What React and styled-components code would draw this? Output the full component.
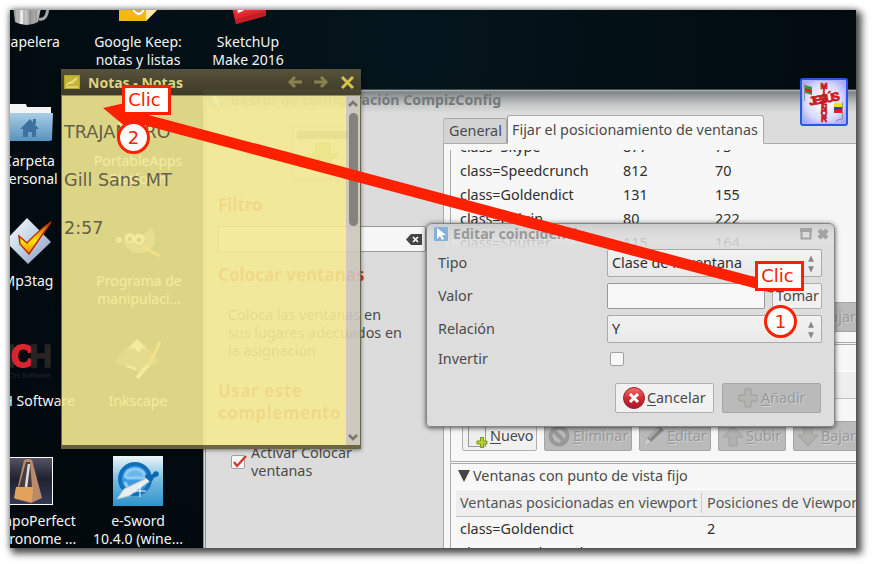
import React from "react";
import styled, { createGlobalStyle } from "styled-components";

const GlobalStyle = createGlobalStyle`
  * { box-sizing: border-box; }
  body { margin: 0; background: #fff; font-family: "Noto Sans", sans-serif; font-size: 14.35px; line-height: 18px; color: #4a4a4a; white-space: nowrap; overflow: hidden; }
`;

const Page = styled.main`
  position: relative;
  width: 872px;
  height: 564px;
  padding: 10px;
  overflow: hidden;
`;
const Desktop = styled.section`
  position: relative;
  width: 846px;
  height: 538px;
  overflow: hidden;
  background: radial-gradient(circle at 400px 30px, #05151d 0, #031117 180px, #020b10 430px, #02080b 800px);
`;
const Elevation = styled.div`
  width: 846px;
  height: 538px;
  box-shadow: 4px 4px 7px 2px rgba(0, 0, 0, 0.62), 0 0 6px 1px rgba(0, 0, 0, 0.35);
`;

/* Desktop launchers */
const Launcher = styled.div`
  position: absolute;
  left: ${(p) => p.$x - 60}px;
  top: ${(p) => p.$y}px;
  width: 120px;
  display: flex;
  flex-direction: column;
  align-items: center;
  color: #f4f6f6;
  font-size: 14px;
  text-align: center;
  white-space: pre;
  svg { display: block; margin-bottom: ${(p) => p.$gap || 6}px; }
`;

/* Settings window */
const SettingsWindow = styled.section`
  position: absolute;
  left: 193px;
  top: 79px;
  width: 680px;
  height: 480px;
  border: 1px solid #85898a;
  border-top-color: #444d50;
  border-left: 3px double #8b9092;
  border-radius: 4px 0 0 0;
  background: linear-gradient(#b5b9ba 0, #7e8485 2px, #a0a4a5 8px, #c6c8c8 15px, #dcdcdc 23px);
`;
const WindowTitle = styled.header`
  display: flex;
  align-items: center;
  height: 25px;
  gap: 6px;
  padding: 0 0 6px 4px;
  color: #74787a;
  font-size: 14.2px;
  font-weight: 700;
`;
const Columns = styled.div`
  display: flex;
  height: 455px;
`;
const Sidebar = styled.aside`
  width: 237px;
  padding: 11px 0 0 12px;
`;
const PluginIcon = styled.div`
  width: 61px;
  height: 53px;
  margin-left: 74px;
  padding: 3px;
  border: 2px solid #c0c0c0;
  border-radius: 3px;
  background: #e6e6e6;
  box-shadow: 0 1px 3px #aaa;
`;
const SectionHeading = styled.h2`
  margin: ${(p) => p.$top}px 0 0;
  color: #d5332c;
  font-size: 17px;
  letter-spacing: ${(p) => p.$tracking || 0}px;
  font-weight: 700;
  line-height: 22px;
`;
const SearchField = styled.div`
  display: flex;
  justify-content: flex-end;
  align-items: center;
  width: 208px;
  height: 26px;
  margin-top: 10px;
  padding-right: 3px;
  border: 1px solid #999;
  border-radius: 2px;
  background: #f7f7f7;
`;
const Description = styled.p`
  margin: 20px 0 0 10px;
`;
const CheckLine = styled.label`
  display: flex;
  gap: 6px;
  margin: 20px 0 0 13px;
`;
const CheckBox = styled.span`
  width: 14px;
  height: 14px;
  flex: none;
  margin-top: ${(p) => p.$top || 0}px;
  margin-left: ${(p) => p.$left || 0}px;
  border: 1px solid #a0a0a0;
  border-radius: 2px;
  background: #f8f8f8;
  svg { display: block; overflow: visible; }
`;
const Notebook = styled.div`
  width: 430px;
`;
const Tabs = styled.nav`
  display: flex;
  align-items: flex-end;
  height: 29px;
`;
const Tab = styled.div`
  height: ${(p) => (p.$active ? 29 : 26)}px;
  width: ${(p) => (p.$active ? 257 : 64)}px;
  padding: ${(p) => (p.$active ? 5 : 3)}px 0 0 ${(p) => (p.$active ? 4 : 5)}px;
  border: 1px solid #aaa;
  border-bottom-color: ${(p) => (p.$active ? "#f7f7f7" : "#aaa")};
  border-left-color: ${(p) => (p.$active ? "#999" : "#bbb")};
  border-radius: 3px 3px 0 0;
  background: ${(p) => (p.$active ? "#f7f7f7" : "#d3d3d3")};
`;
const TabRule = styled.div`
  flex: 1;
  border-bottom: 1px solid #aaa;
`;
const NotebookPage = styled.div`
  height: 430px;
  padding: 6px 0 0 6px;
  border-left: 1px solid #aaa;
  background: #f7f7f7;
`;
const Group = styled.div`
  display: flex;
  flex-direction: column;
  height: ${(p) => p.$height}px;
  margin-bottom: 1px;
  border-left: 1px solid #aaa;
  border-top: ${(p) => (p.$open ? 0 : 1)}px solid #aaa;
  border-bottom: 1px solid #aaa;
  overflow: hidden;
`;
const TableRow = styled.div`
  display: grid;
  grid-template-columns: ${(p) => p.$columns || "163px 92px 1fr"};
  flex: none;
  height: 24px;
  padding-left: 9px;
  line-height: 23px;
  color: #2e2e2e;
`;
const Rows = styled.div`
  margin-top: ${(p) => p.$shift || 0}px;
  flex: 1;
`;
const TableHead = styled(TableRow)`
  height: 28px;
  margin-left: 5px;
  padding-left: 4px;
  border-top: 1px solid #fff;
  border-bottom: 1px solid #c0c0c0;
  background: #eee;
  color: #555;
  line-height: 26px;
  span + span { border-left: 1px solid #ccc; margin: 3px 0; padding-left: 5px; line-height: 20px; }
`;
const Expander = styled.div`
  display: flex;
  align-items: center;
  gap: 3px;
  height: ${(p) => p.$height || 26}px;
  padding: 0 0 2px 7px;
`;
const ButtonBar = styled.div`
  display: flex;
  flex: none;
  gap: 7px;
  margin: 0 0 10px 11px;
`;
const ToolButton = styled.button`
  display: flex;
  align-items: center;
  flex: none;
  gap: ${(p) => p.$gap ?? 2}px;
  width: ${(p) => p.$width}px;
  height: ${(p) => p.$height || 30}px;
  padding: 0 0 0 ${(p) => p.$pad ?? 5}px;
  border: 1px solid ${(p) => (p.$disabled ? "#a5a5a5" : "#b0b0b0")};
  border-radius: 2px;
  background: ${(p) => (p.$disabled ? "#bababa" : "#f1f1f1")};
  color: ${(p) => (p.$disabled ? "#999" : "#484848")};
  text-shadow: ${(p) => (p.$disabled ? "1px 1px 0 #d0d0d0" : "none")};
  font: inherit;
  white-space: nowrap;
  u { text-underline-offset: 2px; text-decoration-thickness: 1px; }
  svg { flex: none; }
`;

/* Match editor dialog */
const Dialog = styled.section`
  position: absolute;
  left: 416px;
  top: 213px;
  width: 409px;
  height: 204px;
  border: 1px solid #858585;
  border-radius: 6px 6px 4px 4px;
  background: linear-gradient(rgb(205, 205, 205) 0, rgba(217, 217, 217, 0.98) 8px, rgba(221, 221, 221, 0.84) 18px, rgba(221, 221, 221, 0.94) 22px, #ddd 25px);
  box-shadow: 0 1px 4px rgba(0, 0, 0, 0.6), 0 0 8px rgba(0, 0, 0, 0.15);
`;
const DialogTitle = styled.header`
  display: flex;
  align-items: center;
  height: 25px;
  padding: 0 5px 5px 7px;
  gap: 5px;
  color: #999;
  font-size: 14.1px;
  font-weight: 700;
  span { flex: 1; }
`;
const Form = styled.div`
  display: grid;
  grid-template-columns: 169px 215px;
  grid-template-rows: 28px 26px 28px 20px;
  row-gap: 6px;
  align-items: center;
  padding-left: 11px;
`;
const Combo = styled.div`
  display: flex;
  justify-content: space-between;
  align-items: center;
  height: 28px;
  padding: 0 5px 0 4px;
  border: 1px solid #aaa;
  border-radius: 2px;
  background: linear-gradient(#f2f2f2, #e9e9e9);
  color: #2e2e2e;
`;
const ValueLine = styled.div`
  display: flex;
  gap: 7px;
`;
const Entry = styled.div`
  width: 158px;
  height: 26px;
  border: 1px solid #999;
  border-radius: 2px;
  background: #f8f8f8;
`;
const DialogActions = styled.footer`
  display: flex;
  justify-content: flex-end;
  gap: 8px;
  padding: 14px 13px 0 0;
`;

/* Notes window */
const NoteWindow = styled.section`
  position: absolute;
  left: 51px;
  top: 59px;
  width: 300px;
  height: 380px;
  display: flex;
  flex-direction: column;
  box-shadow: 0 1px 4px rgba(0, 0, 0, 0.5);
`;
const NoteTitle = styled.header`
  display: flex;
  align-items: center;
  flex: none;
  height: 26px;
  padding: 0 6px 0 3px;
  background: linear-gradient(rgba(92, 87, 62, 0.93), rgba(80, 74, 50, 0.93) 12px, rgba(66, 61, 43, 0.95));
  color: #dfd383;
  font-size: 14px;
  font-weight: 700;
  span { flex: 1; padding: 1px 0 0 8px; }
`;
const NoteBody = styled.div`
  display: flex;
  flex: 1;
  border: 1px solid #6e6744;
  border-top: 1px solid #96905f;
  border-bottom: 4px solid rgba(105, 98, 64, 0.97);
`;
const NoteText = styled.div`
  flex: 1;
  padding: 24px 0 0 2px;
  background: rgba(243, 233, 146, 0.91);
  color: #646048;
  font: 17.6px/24px "DejaVu Sans", sans-serif;
  p { margin: 0 0 24px; }
`;
const NoteScroll = styled.div`
  display: flex;
  flex-direction: column;
  align-items: center;
  width: 14px;
  padding: 4px 0;
  background: rgba(203, 199, 188, 0.91);
`;
const Thumb = styled.div`
  width: 9px;
  height: 113px;
  margin: 5px 0 auto;
  border-radius: 5px;
  background: #84827d;
`;

/* Callouts over the screen */
const Arrow = styled.svg`
  position: absolute;
  left: 0;
  top: 0;
`;
const ClickTag = styled.div`
  position: absolute;
  left: ${(p) => p.$x}px;
  top: ${(p) => p.$y}px;
  width: 49px;
  height: 30px;
  padding-right: 4px;
  border: 3px solid #ff2000;
  background: #fefefe;
  color: #ff2000;
  font: 18px/24px "DejaVu Sans", sans-serif;
  text-align: center;
`;
const StepBadge = styled.div`
  position: absolute;
  left: ${(p) => p.$x}px;
  top: ${(p) => p.$y}px;
  width: 33px;
  height: 33px;
  border: 3px solid #ff2000;
  border-radius: 50%;
  background: #fdfdfd;
  color: #ff2000;
  font: 18px/27px "DejaVu Sans", sans-serif;
  text-align: center;
`;
const Emblem = styled.div`
  position: absolute;
  left: 790px;
  top: 68px;
  width: 48px;
  height: 48px;
  border: 2px solid #2856ea;
  border-radius: 3px;
  background: radial-gradient(circle, #fff 15%, #d6d8ff 60%, #8f95fb 100%);
  box-shadow: inset 0 0 0 1px #aab6ff;
`;

const TrashIcon = () => (
  <svg width="44" height="46">
    <defs><linearGradient id="can"><stop stopColor="#777" /><stop offset=".3" stopColor="#eee" /><stop offset=".6" stopColor="#999" /><stop offset="1" stopColor="#ccc" /></linearGradient></defs>
    <path d="M3 18 6 42Q18 48 29 42L34 18Z" fill="url(#can)" />
    <path d="M10 25v17M15 25v19M21 25v19M27 25v17" stroke="#777" opacity=".6" />
    <path d="M30 39q9 2 9-15" stroke="#a5a5a5" strokeWidth="3" fill="none" />
  </svg>
);
const KeepIcon = () => (
  <svg width="40" height="46">
    <path d="M1 0h38v30L28 41H1Z" fill="#f6b80f" />
    <path d="M28 41V30h11Z" fill="#ffe9a8" />
    <path d="M15 26h11v5q-5 8-11 0Z" fill="#fff" /><path d="M17 29h7v2q-3 3-7 0Z" fill="#cda55a" />
  </svg>
);
const SketchUpIcon = () => (
  <svg width="40" height="46">
    <path d="M2 20 38 10 38 35 8 44Z" fill="#e3242d" /><path d="M2 20 38 10 37 29 8 35Z" fill="#ed3037" />
    <path d="M8 24 24 20 15 31 10 33Z" fill="#fff" /><path d="M8 44 38 36V31L8 39Z" fill="#c71c25" />
  </svg>
);
const FolderIcon = () => (
  <svg width="48" height="40">
    <path d="M0 0h21l1 3h24v10H0Z" fill="#f4f4f4" />
    <defs><linearGradient id="fold" x2="0" y2="1"><stop stopColor="#a9cee6" /><stop offset="1" stopColor="#5692c0" /></linearGradient></defs>
    <path d="M0 9h48l-1 26q0 2-2 2H0Z" fill="url(#fold)" />
    <path d="M15 25 25 15 34 25h-3v8h-4v-5h-4v5h-5v-8Z" fill="#3e719d" /><path d="M28 15h3v5h-3Z" fill="#3e719d" />
  </svg>
);
const PortableIcon = () => (
  <svg width="48" height="46"><circle cx="24" cy="22" r="20" fill="#c8c8c8" /><path d="M10 8h28l-6 15 6 15H10Z" fill="#e8e8e8" /></svg>
);
const TagIcon = () => (
  <svg width="52" height="46">
    <defs><linearGradient id="sheet" x2="1" y2="1"><stop stopColor="#fff" /><stop offset=".5" stopColor="#c4d3e8" /><stop offset="1" stopColor="#8794b8" /></linearGradient><linearGradient id="tick" x2="0" y2="1"><stop stopColor="#e65d10" /><stop offset=".6" stopColor="#ffe600" /><stop offset="1" stopColor="#ef7c0c" /></linearGradient></defs>
    <path d="M25 0 49 24 26 46 3 23Z" fill="url(#sheet)" />
    <path d="M17 18 25 25Q37 12 49 4L27 36 18 26Z" fill="url(#tick)" stroke="#b63106" strokeWidth="1.5" />
  </svg>
);
const GimpIcon = () => (
  <svg width="46" height="36">
    <path d="M9 9q12 9 27-7l3 11q-1 14-14 15Q13 29 8 18Z" fill="#77746c" />
    <circle cx="14" cy="13" r="5" fill="#eee" /><circle cx="23" cy="14" r="5.5" fill="#eee" /><circle cx="14" cy="14" r="2" /><circle cx="23" cy="15" r="2.3" /><circle cx="3" cy="15" r="3" fill="#ccc" />
    <path d="M27 22 44 31" stroke="#f08b21" strokeWidth="3" />
  </svg>
);
const InkscapeIcon = () => (
  <svg width="48" height="46">
    <path d="M19 2q4-3 8 0l17 18q3 6-8 5l-7 4q4 4-6 4L16 29 4 25q-4-2 0-7Z" fill="#555" />
    <path d="M23 0 32 10 27 9 25 14 20 9 14 11Z" fill="#fff" /><path d="M13 27l9 3" stroke="#fff" strokeWidth="2" />
    <path d="M46 3 34 28" stroke="#e9a23a" strokeWidth="3" /><path d="M34 26 23 39" stroke="#eee" strokeWidth="4" />
  </svg>
);
const NchLogo = styled.div`
  display: flex;
  flex-direction: column;
  align-items: flex-end;
  width: 64px;
  height: 50px;
  padding: 2px 10px 0 0;
  color: #282426;
  font: 700 31px/26px "Liberation Sans", sans-serif;
  letter-spacing: -4px;
  span { -webkit-text-stroke: 1.5px #282426; padding-right: 3px; height: 27px; }
  b { color: #d9252f; font-weight: 700; -webkit-text-stroke: 2px #d9252f; }
  small { font-size: 7.5px; line-height: 9px; letter-spacing: 0; font-weight: 400; }
`;
const MetronomeIcon = () => (
  <svg width="46" height="48">
    <defs><linearGradient id="mbg" x2="0" y2="1"><stop stopColor="#555565" /><stop offset=".45" stopColor="#20222f" /><stop offset="1" stopColor="#343b59" /></linearGradient></defs>
    <rect x=".5" y=".5" width="45" height="47" fill="url(#mbg)" stroke="#fff" />
    <path d="M17 3q4-2 8 0l10 38-11 5-16-4Z" fill="#bb8a6b" /><path d="M19 5 12 30h13L23 5Z" fill="#463e42" /><path d="M9 30h17l-1 15L7 41Z" fill="#e3a25c" /><path d="M22 7 19 30" stroke="#ddd" strokeWidth="2.5" />
  </svg>
);
const SwordIcon = () => (
  <svg width="50" height="50">
    <defs><linearGradient id="sbg" x2="0" y2="1"><stop stopColor="#eef6fb" /><stop offset=".5" stopColor="#75b9de" /><stop offset="1" stopColor="#2d93cb" /></linearGradient></defs>
    <rect width="50" height="50" fill="url(#sbg)" />
    <circle cx="22" cy="23" r="15" fill="#3d9be0" stroke="#1170ba" strokeWidth="4" />
    <path d="M12 22q1-9 10-9t10 9H13" fill="#6ab8ee" stroke="#8fcaf3" strokeWidth="3" /><path d="M12 26q3 9 11 9" fill="none" stroke="#8fcaf3" strokeWidth="3" />
    <path d="M4 43 11 33 34 22 37 25 16 40Z" fill="#e8edf0" stroke="#b7c3cc" /><path d="M33 19l6 6M37 22l5-3" stroke="#0e68af" strokeWidth="4" /><circle cx="43" cy="18" r="2.8" fill="#0e68af" />
    <path d="M27 29v12M21 35h12" stroke="#fff" />
  </svg>
);
const CursorIcon = () => (
  <svg width="14" height="14"><rect width="14" height="14" rx="1" fill="#83b1d9" /><path d="M3 1v11l3-3 2 4 2-1-2-4h4Z" fill="#fff" /></svg>
);
const Ban = () => (<svg width="22" height="22"><circle cx="11" cy="11" r="8.5" fill="none" stroke="#989898" strokeWidth="4" /><path d="M5 5l12 12" stroke="#989898" strokeWidth="4" /></svg>);
const Pencil = () => (<svg width="22" height="22"><path d="M1 21 4 13 16 1l5 4L8 17Z" fill="#888" /><path d="M1 21 4 13l4 4Z" fill="#ccc" /><path d="M6 13 16 3" stroke="#b0b0b0" strokeWidth="2" /></svg>);
const BlockArrow = ({ down }) => (<svg width="22" height="22"><path d={down ? "M7 1h8v9h6L11 21 1 10h6Z" : "M7 21h8v-9h6L11 1 1 12h6Z"} fill="#b0b1ae" stroke="#a0a0a0" /></svg>);
const NewDoc = () => (<svg width="20" height="24"><rect x=".5" y="1.5" width="17" height="21" fill="#eee" stroke="#999" /><path d="M12.5 13.5h3v3.5h3.5v3h-3.5v3.5h-3v-3.5h-3.5v-3h3.5Z" fill="#b9d335" stroke="#7a9519" /></svg>);
const PlusIcon = () => (<svg width="20" height="20"><path d="M7 1h6v6h6v6h-6v6H7v-6H1V7h6Z" fill="#b4b5b0" stroke="#9d9e98" /></svg>);
const CancelIcon = () => (
  <svg width="22" height="22"><defs><linearGradient id="can2" x2="0" y2="1"><stop stopColor="#ee7168" /><stop offset=".6" stopColor="#c9232d" /><stop offset="1" stopColor="#a21b34" /></linearGradient></defs><circle cx="11" cy="11" r="10.5" fill="url(#can2)" stroke="#9e1e2e" /><path d="M7 7l8 8M15 7l-8 8" stroke="#fff" strokeWidth="3" /></svg>
);
const Spin = () => (<svg width="10" height="18"><path d="M5 2 7.5 7.5h-5ZM5 18 7.5 12.5h-5Z" fill="#858585" stroke="#858585" strokeWidth=".5" /></svg>);

const matches = [["Skype", "877", "73"], ["Speedcrunch", "812", "70"], ["Goldendict", "131", "155"], ["Pidgin", "80", "222"], ["Shutter", "115", "164"]];

const Actions = () => (
  <ButtonBar>
    <ToolButton $width={75}><NewDoc /><span><u>N</u>uevo</span></ToolButton>
    <ToolButton $disabled $width={88} $pad={3} $gap={3}><Ban /><span><u>E</u>liminar</span></ToolButton>
    <ToolButton $disabled $width={72} $pad={3} $gap={2}><Pencil /><span><u>E</u>ditar</span></ToolButton>
    <ToolButton $disabled $width={68} $pad={3} $gap={2}><BlockArrow /><span><u>S</u>ubir</span></ToolButton>
    <ToolButton $disabled $width={70} $pad={3} $gap={2}><BlockArrow down /><span><u>B</u>ajar</span></ToolButton>
  </ButtonBar>
);

export default function App() {
  return (
    <Page>
      <GlobalStyle />
      <Elevation>
        <Desktop>
          <Launcher $x={21} $y={-30} $gap={7}><TrashIcon />Papelera</Launcher>
          <Launcher $x={128} $y={-30} $gap={7}><KeepIcon />{"Google Keep:\nnotas y listas"}</Launcher>
          <Launcher $x={238} $y={-30} $gap={7}><SketchUpIcon />{"SketchUp\nMake 2016"}</Launcher>
          <Launcher $x={19} $y={94} $gap={8}><FolderIcon />{"Carpeta\nPersonal"}</Launcher>
          <Launcher $x={128} $y={88} $gap={8}><PortableIcon />{"PortableApps\nPlatform"}</Launcher>
          <Launcher $x={18} $y={208} $gap={8}><TagIcon />Mp3tag</Launcher>
          <Launcher $x={129} $y={215} $gap={11}><GimpIcon />{"Programa de\nmanipulaci..."}</Launcher>
          <Launcher $x={19} $y={332}><NchLogo><span>N<b>C</b>H</span><small>NCH Software</small></NchLogo>NCH Software</Launcher>
          <Launcher $x={128} $y={329} $gap={7}><InkscapeIcon />Inkscape</Launcher>
          <Launcher $x={20} $y={447} $gap={7}><MetronomeIcon />{"TempoPerfect\nMetronome ..."}</Launcher>
          <Launcher $x={128} $y={446} $gap={6}><SwordIcon />{"e-Sword\n10.4.0 (wine..."}</Launcher>

          <SettingsWindow>
            <WindowTitle><CursorIcon />Gestor de configuración CompizConfig</WindowTitle>
            <Columns>
              <Sidebar>
                <PluginIcon><svg width="51" height="43"><path d="M0 0h51v8H0Z" fill="#777" /><path d="M19 12h14v11h8L26 38 10 23h9Z" fill="#9dc641" stroke="#718f30" /></svg></PluginIcon>
                <SectionHeading $top={15}>Filtro</SectionHeading>
                <SearchField><svg width="16" height="11"><path d="M5 0h11v11H5L0 5.5Z" fill="#444" /><path d="M7 3l5 5M12 3 7 8" stroke="#fff" strokeWidth="1.7" /></svg></SearchField>
                <SectionHeading $top={12}>Colocar ventanas</SectionHeading>
                <Description>Coloca las ventanas en<br />sus lugares adecuados en<br />la asignación</Description>
                <SectionHeading $top={20} $tracking={0.5}>Usar este<br />complemento</SectionHeading>
                <CheckLine>
                  <CheckBox $top={11}><svg width="14" height="12"><path d="M2 6 5 10 14 0" fill="none" stroke="#d6352a" strokeWidth="2.3" /></svg></CheckBox>
                  <span>Activar Colocar<br />ventanas</span>
                </CheckLine>
              </Sidebar>
              <Notebook>
                <Tabs><Tab>General</Tab><Tab $active>Fijar el posicionamiento de ventanas</Tab><TabRule /></Tabs>
                <NotebookPage>
                  <Group $height={193} $open>
                    <Rows $shift={-15}>
                      {matches.map(([name, x, y]) => <TableRow key={name}><span>class={name}</span><span>{x}</span><span>{y}</span></TableRow>)}
                    </Rows>
                    <Actions />
                  </Group>
                  <Group $height={118}>
                    <Expander />
                    <TableHead />
                    <Rows />
                    <Actions />
                  </Group>
                  <Group $height={180}>
                    <Expander $height={25}><svg width="12" height="12"><path d="M0 0h12L6 12Z" fill="#454545" /></svg>Ventanas con punto de vista fijo</Expander>
                    <TableHead $columns="241px 1fr"><span>Ventanas posicionadas en viewport</span><span>Posiciones de Viewport X</span></TableHead>
                    <TableRow $columns="247px 1fr"><span>class=Goldendict</span><span>2</span></TableRow>
                    <TableRow $columns="247px 1fr"><span>class=Speedcrunch</span></TableRow>
                  </Group>
                </NotebookPage>
              </Notebook>
            </Columns>
          </SettingsWindow>

          <Dialog>
            <DialogTitle>
              <CursorIcon /><span>Editar coincidencia</span>
              <svg width="12" height="12"><path d="M1.5 1v9.5h9V1" fill="none" stroke="#a3a3a3" strokeWidth="2" /><path d="M0 2h12" stroke="#a3a3a3" strokeWidth="4" /></svg>
              <svg width="12" height="12"><path d="M2 2l8 8M10 2 2 10" stroke="#a3a3a3" strokeWidth="4.5" /></svg>
            </DialogTitle>
            <Form>
              <span>Tipo</span><Combo>Clase de la ventana<Spin /></Combo>
              <span>Valor</span><ValueLine><Entry /><ToolButton $width={50} $height={26} $pad={3}>Tomar</ToolButton></ValueLine>
              <span>Relación</span><Combo>Y<Spin /></Combo>
              <span>Invertir</span><CheckBox $left={3} />
            </Form>
            <DialogActions>
              <ToolButton $width={99} $pad={7} $gap={2}><CancelIcon /><span><u>C</u>ancelar</span></ToolButton>
              <ToolButton $disabled $width={99} $pad={15} $gap={3}><PlusIcon /><span><u>A</u>ñadir</span></ToolButton>
            </DialogActions>
          </Dialog>

          <Emblem>
            <svg width="44" height="44" fontFamily="Liberation Sans, sans-serif" fontWeight="700" fill="#ee1b24" stroke="#b81b25" strokeWidth=".7">
              <g fontSize="8.5" textAnchor="middle">{[..."MISENOR"].map((c, i) => <text key={i} x="22" y={8.5 + i * 5.5}>{c}</text>)}</g>
              <text x="7" y="23" fontSize="12" transform="rotate(-10 22 20)" textLength="31">JESÚS</text>
              <path d="M3 5l7 2v8l-7-2Z" fill="#3a9a32" stroke="none" /><path d="M3 8l7 2v3l-7-2Z" stroke="none" /><path d="M2.5 4v17M40.5 22v17" stroke="#777" />
              <path d="M32 23h8v4h-8Z" fill="#ffe600" stroke="none" /><path d="M32 27h8v3h-8Z" fill="#254aaa" stroke="none" /><path d="M32 30h8v3h-8Z" stroke="none" />
              <path d="M34 41q3-2 6-2" fill="none" stroke="#777" />
            </svg>
          </Emblem>

          <NoteWindow>
            <NoteTitle>
              <svg width="16" height="14"><rect x=".5" y=".5" width="15" height="13" fill="#c4b532" stroke="#b5a52a" /><path d="M2 10 13 3l-4 5H4M2 12h12" stroke="#f8efad" fill="none" /></svg>
              <span>Notas - Notas</span>
              <svg width="68" height="16" fill="none" strokeWidth="3"><path d="M8 3 3 8l5 5M3 8h12M34 3l5 5-5 5M39 8H27" stroke="#88804f" /><path d="M55 3l11 11M66 3 55 14" stroke="#d2c24c" /></svg>
            </NoteTitle>
            <NoteBody>
              <NoteText><p>TRAJAN PRO</p><p>Gill Sans MT</p><p>2:57</p></NoteText>
              <NoteScroll>
                <svg width="10" height="8"><path d="M1 6 5 2l4 4" fill="none" stroke="#77756c" strokeWidth="2.5" /></svg>
                <Thumb />
                <svg width="10" height="8"><path d="M1 2 5 6l4-4" fill="none" stroke="#77756c" strokeWidth="2.5" /></svg>
              </NoteScroll>
            </NoteBody>
          </NoteWindow>
        </Desktop>
      </Elevation>
      <Arrow width="872" height="564">
        <path d="M135 117 771 287" stroke="#ff2000" strokeWidth="11" strokeLinecap="round" />
        <path d="M103 108 151 97 138 137Z" fill="#ff2000" />
      </Arrow>
      <ClickTag $x={122} $y={85}>Clic</ClickTag>
      <StepBadge $x={117} $y={121}>2</StepBadge>
      <ClickTag $x={755} $y={261}>Clic</ClickTag>
      <StepBadge $x={764} $y={305}>1</StepBadge>
    </Page>
  );
}
